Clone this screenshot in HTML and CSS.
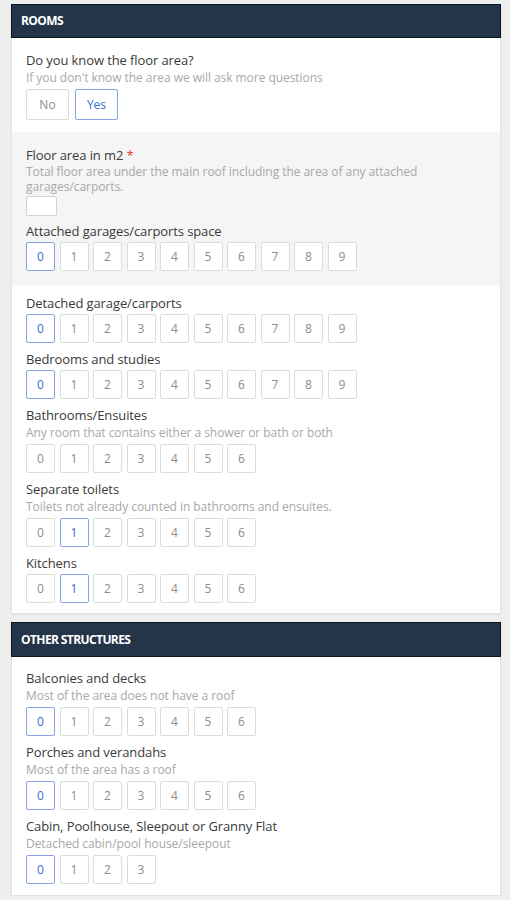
FILE: index.html
```html
<!DOCTYPE html>
<html>
<head>
<meta charset="utf-8">
<link rel="stylesheet" href="styles.css">
</head>
<body>
<div class="page">
  <section class="card">
    <div class="card-head">ROOMS</div>
    <div class="card-body">
      <div class="field">
        <div class="label">Do you know the floor area?</div>
        <div class="desc">If you don't know the area we will ask more questions</div>
        <div class="opts">
          <span class="opt wide">No</span>
          <span class="opt wide sel">Yes</span>
        </div>
      </div>
      <div class="shaded">
        <div class="field tight">
          <div class="label">Floor area in m2 <span class="req">*</span></div>
          <div class="desc two">Total floor area under the main roof including the area of any attached garages/carports.</div>
          <div class="input"></div>
        </div>
        <div class="field">
          <div class="label">Attached garages/carports space</div>
          <div class="opts">
            <span class="opt sel">0</span><span class="opt">1</span><span class="opt">2</span><span class="opt">3</span><span class="opt">4</span><span class="opt">5</span><span class="opt">6</span><span class="opt">7</span><span class="opt">8</span><span class="opt">9</span>
          </div>
        </div>
      </div>
      <div class="plain">
        <div class="field">
          <div class="label">Detached garage/carports</div>
          <div class="opts">
            <span class="opt sel">0</span><span class="opt">1</span><span class="opt">2</span><span class="opt">3</span><span class="opt">4</span><span class="opt">5</span><span class="opt">6</span><span class="opt">7</span><span class="opt">8</span><span class="opt">9</span>
          </div>
        </div>
        <div class="field">
          <div class="label">Bedrooms and studies</div>
          <div class="opts">
            <span class="opt sel">0</span><span class="opt">1</span><span class="opt">2</span><span class="opt">3</span><span class="opt">4</span><span class="opt">5</span><span class="opt">6</span><span class="opt">7</span><span class="opt">8</span><span class="opt">9</span>
          </div>
        </div>
        <div class="field">
          <div class="label">Bathrooms/Ensuites</div>
          <div class="desc">Any room that contains either a shower or bath or both</div>
          <div class="opts">
            <span class="opt">0</span><span class="opt">1</span><span class="opt">2</span><span class="opt">3</span><span class="opt">4</span><span class="opt">5</span><span class="opt">6</span>
          </div>
        </div>
        <div class="field">
          <div class="label">Separate toilets</div>
          <div class="desc">Toilets not already counted in bathrooms and ensuites.</div>
          <div class="opts">
            <span class="opt">0</span><span class="opt sel">1</span><span class="opt">2</span><span class="opt">3</span><span class="opt">4</span><span class="opt">5</span><span class="opt">6</span>
          </div>
        </div>
        <div class="field">
          <div class="label">Kitchens</div>
          <div class="opts">
            <span class="opt">0</span><span class="opt sel">1</span><span class="opt">2</span><span class="opt">3</span><span class="opt">4</span><span class="opt">5</span><span class="opt">6</span>
          </div>
        </div>
      </div>
    </div>
  </section>

  <section class="card">
    <div class="card-head tall">OTHER STRUCTURES</div>
    <div class="card-body other">
      <div class="field">
        <div class="label">Balconies and decks</div>
        <div class="desc">Most of the area does not have a roof</div>
        <div class="opts">
          <span class="opt sel">0</span><span class="opt">1</span><span class="opt">2</span><span class="opt">3</span><span class="opt">4</span><span class="opt">5</span><span class="opt">6</span>
        </div>
      </div>
      <div class="field">
        <div class="label">Porches and verandahs</div>
        <div class="desc">Most of the area has a roof</div>
        <div class="opts">
          <span class="opt sel">0</span><span class="opt">1</span><span class="opt">2</span><span class="opt">3</span><span class="opt">4</span><span class="opt">5</span><span class="opt">6</span>
        </div>
      </div>
      <div class="field">
        <div class="label">Cabin, Poolhouse, Sleepout or Granny Flat</div>
        <div class="desc">Detached cabin/pool house/sleepout</div>
        <div class="opts">
          <span class="opt sel">0</span><span class="opt">1</span><span class="opt">2</span><span class="opt">3</span>
        </div>
      </div>
    </div>
  </section>
</div>
</body>
</html>
```

FILE: styles.css
```css
html, body {
  margin: 0;
  padding: 0;
  background: #efefef;
}
body {
  font-family: "Open Sans", "Liberation Sans", sans-serif;
  color: #3a3a3a;
}
.page {
  padding: 4px 9px 0 11px;
  display: flex;
  flex-direction: column;
  gap: 8px;
}
.card {
  background: #fff;
  border: 1px solid #e2e2e2;
  border-top: none;
  box-shadow: 0 1px 2px rgba(0,0,0,0.06);
}
.card-head {
  background: #24354a;
  border: 1px solid #0c1522;
  margin: 0 -1px;
  height: 32px;
  line-height: 32px;
  padding-left: 9px;
  color: #fff;
  font-weight: 700;
  font-size: 12px;
  letter-spacing: -0.6px;
}
.card-head.tall {
  height: 33px;
  line-height: 33px;
}
.card-body {
  padding: 13px 0 3px;
}
.card-body.other {
  padding-top: 12px;
  padding-bottom: 4px;
}
.field {
  padding: 0 14px 0 14px;
  margin-bottom: 7px;
}
.field.tight {
  margin-bottom: 6px;
}
.label {
  font-size: 13px;
  line-height: 18px;
  color: #3a3a3a;
  letter-spacing: -0.1px;
}
.req {
  color: #e0302b;
}
.desc {
  font-size: 12px;
  line-height: 18px;
  color: #a8a8a8;
  letter-spacing: -0.05px;
}
.desc.two {
  line-height: 15px;
}
.opts {
  display: flex;
  gap: 4.5px;
  margin-top: 2px;
}
.opt {
  box-sizing: border-box;
  width: 29px;
  height: 29px;
  border: 1px solid #dcdcdc;
  border-radius: 2px;
  display: flex;
  align-items: center;
  justify-content: center;
  font-size: 12px;
  color: #8c8c8c;
  background: #fff;
}
.opt.wide {
  width: 43px;
  height: 31px;
  margin-right: 1.5px;
}
.opt.sel {
  border-color: #86a6e2;
  color: #3b6bd0;
}
.shaded {
  background: #f5f5f5;
  margin-top: 12px;
  padding: 14px 0 0;
}
.shaded > .field:last-child {
  margin-bottom: 0;
  padding-bottom: 14px;
}
.input {
  box-sizing: border-box;
  width: 31px;
  height: 20px;
  border: 1px solid #d2d2d2;
  border-radius: 2px;
  background: #fff;
  margin-top: 2px;
}
.plain {
  padding-top: 9px;
}
```
